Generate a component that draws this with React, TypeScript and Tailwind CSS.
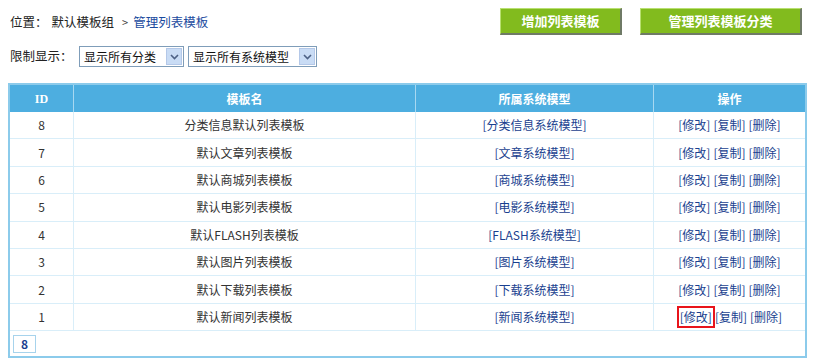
import React from "react";

const rows = [
  { id: 8, name: "分类信息默认列表模板", model: "分类信息系统模型" },
  { id: 7, name: "默认文章列表模板", model: "文章系统模型" },
  { id: 6, name: "默认商城列表模板", model: "商城系统模型" },
  { id: 5, name: "默认电影列表模板", model: "电影系统模型" },
  { id: 4, name: "默认FLASH列表模板", model: "FLASH系统模型" },
  { id: 3, name: "默认图片列表模板", model: "图片系统模型" },
  { id: 2, name: "默认下载列表模板", model: "下载系统模型" },
  { id: 1, name: "默认新闻列表模板", model: "新闻系统模型" },
];

const font = { fontFamily: '"Noto Sans CJK SC", "Liberation Sans", sans-serif' };

function Select({ label, width }: { label: string; width: string }) {
  return (
    <div className={`flex h-[21px] items-center border border-[#7f9db9] bg-white ${width}`}>
      <span className="flex-1 pl-[4px] text-[12px] leading-none text-[#111]">{label}</span>
      <span className="mr-[1px] flex h-[17px] w-[16px] items-center justify-center border border-[#b4c8e8] bg-[#c9dcf5]">
        <svg width="9" height="6" viewBox="0 0 9 6">
          <path d="M1 1 L4.5 4.5 L8 1" stroke="#4d6185" strokeWidth="1.6" fill="none" />
        </svg>
      </span>
    </div>
  );
}

function GreenButton({ label, width }: { label: string; width: string }) {
  return (
    <div
      className={`flex h-[27px] items-center justify-center border-t border-l border-[#b8e070] border-r-2 border-b-2 border-r-[#6f7a66] border-b-[#6f7a66] bg-[#82bb1e] text-[13px] font-bold text-white ${width}`}
    >
      {label}
    </div>
  );
}

export default function App() {
  return (
    <div className="h-[364px] w-[813px] bg-white text-[12px] text-[#222]" style={font}>
      <div className="flex items-start justify-between pr-[11px] pt-[8px]">
        <div className="flex items-center pl-[10px] pt-[5px] text-[12.5px] text-[#222]">
          <span>位置：</span>
          <span className="ml-[4px]">默认模板组</span>
          <span className="ml-[8px] text-[11px] text-[#444]">&gt;</span>
          <span className="ml-[5px] text-[#1a4a9e]">管理列表模板</span>
        </div>
        <div className="flex gap-[18px]">
          <GreenButton label="增加列表模板" width="w-[122px]" />
          <GreenButton label="管理列表模板分类" width="w-[162px]" />
        </div>
      </div>
      <div className="mt-[11px] flex items-center pl-[10px]">
        <span className="w-[69px] text-[12.5px]">限制显示：</span>
        <Select label="显示所有分类" width="w-[105px]" />
        <div className="w-[4px]" />
        <Select label="显示所有系统模型" width="w-[129px]" />
      </div>
      <div className="ml-[8px] mt-[16px] w-[799px] border-2 border-[#8ccbeb]">
        <div className="flex h-[27px] bg-[#4daee0] text-[12px] font-bold text-white">
          <div className="flex w-[64px] items-center justify-center border-r border-[#a7d8f1]" style={{ fontFamily: '"Liberation Serif", serif' }}>
            ID
          </div>
          <div className="flex w-[342px] items-center justify-center border-r border-[#a7d8f1]">模板名</div>
          <div className="flex w-[238px] items-center justify-center border-r border-[#a7d8f1]">所属系统模型</div>
          <div className="flex flex-1 items-center justify-center">操作</div>
        </div>
        {rows.map((r, i) => (
          <div key={r.id} className="flex h-[27.4px] border-b border-[#d9eef9] text-[12px]">
            <div className="flex w-[64px] items-center justify-center border-r border-[#d9eef9] text-[#333]">{r.id}</div>
            <div className="flex w-[342px] items-center justify-center border-r border-[#d9eef9] text-[#333]">{r.name}</div>
            <div className="flex w-[238px] items-center justify-center border-r border-[#d9eef9] text-[#1a3f8f]">
              [{r.model}]
            </div>
            <div className="flex flex-1 items-center justify-center text-[#1a3f8f]">
              {i === rows.length - 1 ? (
                <>
                  <span className="border-2 border-[#e8141b] px-[1px] leading-[18px]">[修改]</span>
                  <span>[复制]</span>
                  <span className="ml-[3px]">[删除]</span>
                </>
              ) : (
                <>
                  <span>[修改]</span>
                  <span className="ml-[3px]">[复制]</span>
                  <span className="ml-[3px]">[删除]</span>
                </>
              )}
            </div>
          </div>
        ))}
        <div className="flex h-[25px] items-center pl-[3px]">
          <div className="flex h-[18px] w-[23px] items-center justify-center border border-[#a7d3ec] text-[12px] font-bold text-[#1a3f8f]">
            8
          </div>
        </div>
      </div>
    </div>
  );
}
